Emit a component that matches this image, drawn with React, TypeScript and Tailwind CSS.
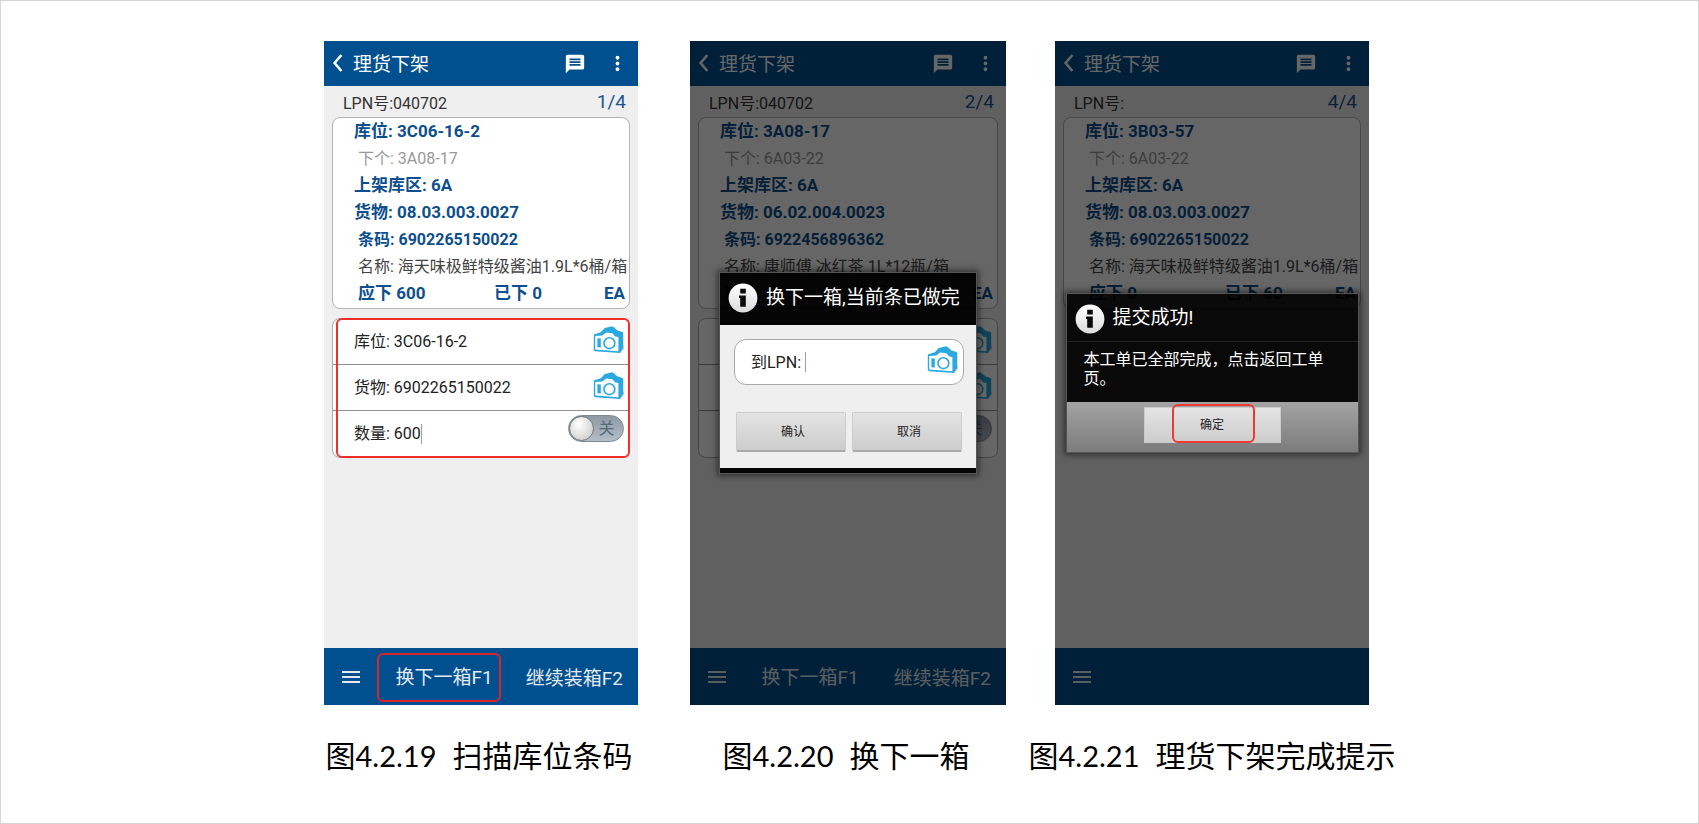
import { useState } from "react";
import type { ReactNode } from "react";
import { MdMenu, MdMessage, MdMoreVert } from "react-icons/md";
import clsx from "clsx";

type Task = {
  lpn: string;
  page: string;
  location: string;
  next: string;
  area: string;
  goods: string;
  barcode: string;
  name: string;
  due: string;
  done: string;
};

const TASKS: Task[] = [
  {
    lpn: "040702",
    page: "1/4",
    location: "3C06-16-2",
    next: "3A08-17",
    area: "6A",
    goods: "08.03.003.0027",
    barcode: "6902265150022",
    name: "海天味极鲜特级酱油1.9L*6桶/箱",
    due: "600",
    done: "0",
  },
  {
    lpn: "040702",
    page: "2/4",
    location: "3A08-17",
    next: "6A03-22",
    area: "6A",
    goods: "06.02.004.0023",
    barcode: "6922456896362",
    name: "康师傅 冰红茶 1L*12瓶/箱",
    due: "600",
    done: "0",
  },
  {
    lpn: "",
    page: "4/4",
    location: "3B03-57",
    next: "6A03-22",
    area: "6A",
    goods: "08.03.003.0027",
    barcode: "6902265150022",
    name: "海天味极鲜特级酱油1.9L*6桶/箱",
    due: "0",
    done: "60",
  },
];

function CameraIcon() {
  return (
    <svg viewBox="0 0 32 30" width={32} height={30} aria-hidden="true">
      <path d="M27 27l4-4v-3l-3-2z" fill="#c9cdd0" />
      <path
        d="M0.8 8.5l7-2.2 4-4.3 6.2-1.4h2l4.6 4 5 1.4 0.6 1v14.5L27 27 2 25.2l-1.2-1z"
        fill="#29a9e0"
      />
      <path
        d="M2.2 10l7-.4 4-3 6.2.6 2.8 3.4 3.2.4v14.2L2.2 23.6z"
        fill="#fff"
      />
      <path d="M4.4 12.2l3.4.2v9l-3.4-.2z" fill="#29a9e0" />
      <circle
        cx="16.4"
        cy="17.2"
        r="5.4"
        fill="#fff"
        stroke="#29a9e0"
        strokeWidth="1.6"
      />
    </svg>
  );
}

function InfoIcon() {
  return (
    <svg
      viewBox="0 0 30 30"
      width={30}
      height={30}
      className="shrink-0"
      aria-hidden="true"
    >
      <defs>
        <linearGradient id="info-fill" x1="0" y1="0" x2="0" y2="1">
          <stop offset="0" stopColor="#fff" />
          <stop offset="1" stopColor="#dcdcdc" />
        </linearGradient>
      </defs>
      <circle cx="15" cy="15" r="14.4" fill="url(#info-fill)" />
      <path
        d="M12.2 5.8h5.6v4.8h-5.6zM11 12.4h6.8v11.4h-5.6v-8.8H11z"
        fill="#0a0a0a"
      />
    </svg>
  );
}

// 文本光标
function Caret() {
  return <span className="w-px h-5 shrink-0 bg-gray-400" />;
}

function CameraButton({ label }: { label: string }) {
  return (
    <button type="button" aria-label={label} className="shrink-0 pb-[2px]">
      <CameraIcon />
    </button>
  );
}

function FormRow({
  id,
  label,
  initial,
  focused,
  children,
}: {
  id: string;
  label: string;
  initial: string;
  focused?: boolean;
  children: ReactNode;
}) {
  const [value, setValue] = useState(initial);

  return (
    <div className="flex h-[46px] items-center pl-[21px] pr-1 text-base text-[#222]">
      <label htmlFor={id} className="shrink-0 whitespace-pre">
        {label}:{" "}
      </label>
      <div className="flex min-w-0 flex-1 items-center">
        <input
          id={id}
          value={value}
          onChange={(e) => setValue(e.target.value)}
          className="field-sizing-content min-w-0 bg-transparent outline-none"
        />
        {focused && <Caret />}
      </div>
      {children}
    </div>
  );
}

function PowerSwitch() {
  return (
    <label className="mt-1 mr-px flex h-[27px] w-[56px] shrink-0 items-center self-start rounded-full border border-[#7f8994] bg-linear-to-b from-[#8e99a4] to-[#b3bec8]">
      <input
        type="checkbox"
        role="switch"
        className="h-[25px] w-[25px] appearance-none rounded-full border border-[#75787c] bg-radial-[at_40%_30%] from-white to-[#c4c4c6]"
      />
      <span className="flex-1 pr-1 text-center text-base leading-6 text-[#536b80]">
        关
      </span>
    </label>
  );
}

function TaskForm({ id, task }: { id: string; task: Task }) {
  return (
    <form className="mt-[9px] divide-y divide-[#909090] rounded-lg border border-[#aaa] bg-white">
      <FormRow id={`${id}-location`} label="库位" initial={task.location}>
        <CameraButton label="扫描库位" />
      </FormRow>
      <FormRow id={`${id}-goods`} label="货物" initial={task.barcode}>
        <CameraButton label="扫描货物" />
      </FormRow>
      <FormRow id={`${id}-count`} label="数量" initial={task.due} focused>
        <PowerSwitch />
      </FormRow>
    </form>
  );
}

function TaskCard({ task }: { task: Task }) {
  return (
    <div className="rounded-lg border border-[#b4b4b4] bg-white pb-px pl-[21px] pr-1 text-[17px] leading-[27px] font-bold whitespace-nowrap text-[#0d4f8e]">
      <p>库位: {task.location}</p>
      <p className="pl-1 text-base leading-[27px] font-normal text-[#999]">
        下个: {task.next}
      </p>
      <p>上架库区: {task.area}</p>
      <p>货物: {task.goods}</p>
      <p className="pl-1 text-base leading-[27px]">条码: {task.barcode}</p>
      <p className="pl-1 text-base leading-[27px] font-normal text-[#444]">
        名称: {task.name}
      </p>
      <div className="flex pl-1">
        <p className="w-[136px]">应下 {task.due}</p>
        <p className="flex-1">已下 {task.done}</p>
        <p>EA</p>
      </div>
    </div>
  );
}

function Phone({
  id,
  task,
  showForm,
  actions,
  highlight,
  dialog,
}: {
  id: string;
  task: Task;
  showForm?: boolean;
  actions?: boolean;
  highlight?: boolean;
  dialog?: ReactNode;
}) {
  return (
    <section className="relative flex min-h-[664px] w-full flex-col bg-[#efefef] font-['Roboto','Noto_Sans_CJK_SC',sans-serif]">
      <header className="flex h-[45px] items-center bg-[#004f8f] pl-[7px] pr-[9px] text-white">
        <button type="button" aria-label="返回" className="w-[22px]">
          <svg viewBox="0 0 12 20" width={12} height={20} aria-hidden="true">
            <path
              d="M10.4 1L3.6 9l6.8 8"
              fill="none"
              stroke="currentColor"
              strokeWidth="2.6"
            />
          </svg>
        </button>
        <h2 className="flex-1 pt-[3px] text-[19px]">理货下架</h2>
        <button type="button" aria-label="消息" className="mr-5">
          <MdMessage size={22} />
        </button>
        <button type="button" aria-label="更多">
          <MdMoreVert size={23} />
        </button>
      </header>

      <div className="flex-1 px-2">
        <div className="flex h-[31px] items-center justify-between pl-[11px] pr-1 text-base text-[#333]">
          <p className="pt-1">LPN号:{task.lpn}</p>
          <p className="pt-[2px] text-[19px] text-[#1d5593]">{task.page}</p>
        </div>
        <TaskCard task={task} />
        {showForm && (
          <div className="relative">
            <TaskForm id={id} task={task} />
            {highlight && (
              <div className="pointer-events-none absolute inset-y-0 right-0 left-1 rounded-md border-2 border-[#f0302a]" />
            )}
          </div>
        )}
      </div>

      <footer className="flex h-[57px] items-center bg-[#004f8f] pl-[15px] pr-[11px] text-[19px] text-[#e3ebf2]">
        <button type="button" aria-label="菜单">
          <MdMenu size={24} />
        </button>
        {actions && (
          <>
            <button
              type="button"
              className={clsx(
                "mt-[2px] ml-[14px] h-[49px] w-[124px] rounded-md border-2 pt-[2px] pl-[10px] whitespace-nowrap",
                highlight ? "border-[#d8262c]" : "border-transparent",
              )}
            >
              换下一箱F1
            </button>
            <button
              type="button"
              className="ml-auto px-1 pt-[5px] whitespace-nowrap"
            >
              继续装箱F2
            </button>
          </>
        )}
      </footer>

      {dialog && (
        <div className="absolute inset-0 flex items-center justify-center bg-black/60">
          {dialog}
        </div>
      )}
    </section>
  );
}

function DialogTitle({ children }: { children: ReactNode }) {
  return (
    <div className="flex items-center gap-2 pl-2 text-white">
      <InfoIcon />
      <h3 className="text-[19px] whitespace-nowrap">{children}</h3>
    </div>
  );
}

function DialogButton({ children }: { children: ReactNode }) {
  return (
    <button
      type="button"
      className="h-10 rounded-xs border border-b-2 border-[#ccc] border-b-[#aaa] bg-linear-to-b from-[#e4e4e4] to-[#cdcdcd] pl-1 text-xs text-[#222]"
    >
      {children}
    </button>
  );
}

function NextBoxDialog() {
  const [lpn, setLpn] = useState("");

  return (
    <div
      role="dialog"
      aria-label="换下一箱"
      className="w-[258px] border border-[#555] bg-black/95 shadow-[0_0_6px_2px_rgba(0,0,0,0.5)]"
    >
      <div className="flex h-[52px] items-center pb-[2px]">
        <DialogTitle>换下一箱,当前条已做完</DialogTitle>
      </div>
      <div className="bg-[#efefef] pt-[14px] pr-3 pb-4 pl-[14px]">
        <div className="flex h-[46px] items-center rounded-xl border border-[#aaa] bg-white pr-1 pl-4 text-base text-[#222]">
          <label htmlFor="to-lpn" className="pt-[2px] whitespace-pre">
            到LPN:{" "}
          </label>
          <Caret />
          <input
            id="to-lpn"
            value={lpn}
            onChange={(e) => setLpn(e.target.value)}
            className="min-w-0 flex-1 bg-transparent outline-none"
          />
          <CameraButton label="扫描LPN" />
        </div>
        <div className="mt-[27px] grid grid-cols-2 gap-[6px] px-[2px]">
          <DialogButton>确认</DialogButton>
          <DialogButton>取消</DialogButton>
        </div>
      </div>
      <div className="h-[5px]" />
    </div>
  );
}

function DoneDialog() {
  return (
    <div
      role="dialog"
      aria-label="提交成功"
      className="w-[293px] border border-[#555] bg-black/90 shadow-[0_0_6px_2px_rgba(0,0,0,0.5)]"
    >
      <div className="flex h-[48px] items-center border-b border-[#222] pt-[2px]">
        <DialogTitle>提交成功!</DialogTitle>
      </div>
      <p className="h-[60px] pt-2 pr-8 pl-[17px] text-base leading-[19px] text-white">
        本工单已全部完成，点击返回工单页。
      </p>
      <div className="flex h-[50px] justify-center bg-linear-to-b from-[#a3a3a3] to-[#7c7c7c] pt-[5px]">
        <div className="relative">
          <button
            type="button"
            className="h-9 w-[137px] border border-[#ccc] bg-linear-to-b from-[#e4e4e4] to-[#cdcdcd] text-xs text-[#222]"
          >
            确定
          </button>
          <div className="pointer-events-none absolute -top-[3px] left-7 h-[39px] w-[83px] rounded-md border-2 border-[#ee3a32]" />
        </div>
      </div>
    </div>
  );
}

function Caption({ number, children }: { number: string; children: ReactNode }) {
  return (
    <figcaption className="mt-[26px] flex items-baseline justify-center font-['Noto_Sans_CJK_SC',sans-serif] text-[30px] leading-[46px] whitespace-nowrap text-black">
      图
      <span className="mr-4 font-['Lato','Noto_Sans_CJK_SC',sans-serif] text-[29px]">
        {number}
      </span>
      {children}
    </figcaption>
  );
}

export default function App() {
  return (
    <main className="flex min-h-screen justify-center border border-[#d4d4d4] bg-white pt-10 pr-[6px]">
      <div className="grid grid-cols-[366px_365px_314px] content-start">
        <figure className="w-[314px]">
          <Phone id="scan" task={TASKS[0]} showForm actions highlight />
          <div className="pr-1">
            <Caption number="4.2.19">扫描库位条码</Caption>
          </div>
        </figure>
        <figure className="w-[316px]">
          <Phone
            id="next"
            task={TASKS[1]}
            showForm
            actions
            dialog={<NextBoxDialog />}
          />
          <div className="pr-1">
            <Caption number="4.2.20">换下一箱</Caption>
          </div>
        </figure>
        <figure className="flex w-[314px] flex-col items-center">
          <Phone id="done" task={TASKS[2]} dialog={<DoneDialog />} />
          <Caption number="4.2.21">理货下架完成提示</Caption>
        </figure>
      </div>
    </main>
  );
}
